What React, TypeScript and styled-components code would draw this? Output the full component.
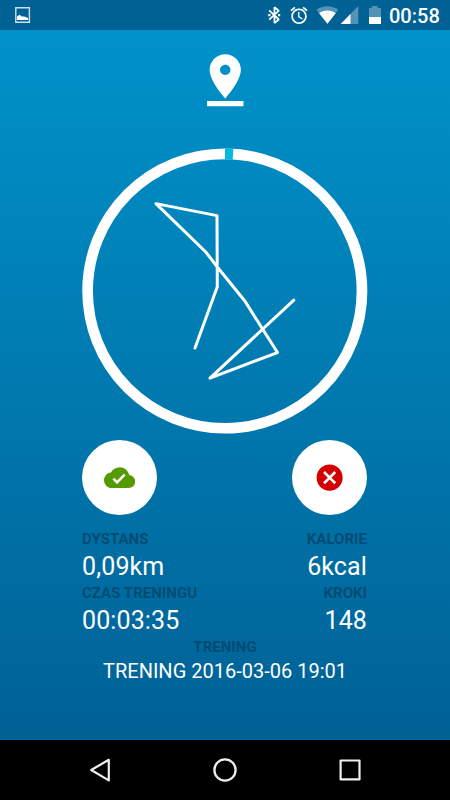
import React from 'react';
import styled, { createGlobalStyle } from 'styled-components';

const GlobalStyle = createGlobalStyle`
  * { box-sizing: border-box; }
  body { margin: 0; background: #000; font-family: Roboto, sans-serif; }
  svg { display: block; flex: none; }
`;

const Screen = styled.div`
  width: 450px;
  height: 800px;
  display: flex;
  flex-direction: column;
  overflow: hidden;
  color: #fff;
`;

const StatusBar = styled.header`
  height: 30px;
  background: #006195;
  display: flex;
  justify-content: space-between;
  padding: 0 10px 0 15px;
`;

const StatusGroup = styled.div`
  display: flex;
  align-items: center;
`;

const Clock = styled.span`
  width: 51px;
  margin-left: 8px;
  font-size: 20px;
  font-weight: 500;
  line-height: 30px;
  padding-top: 1px;
  white-space: nowrap;
`;

const Content = styled.main`
  height: 710px;
  background: linear-gradient(#0092ca, #006195);
  display: flex;
  flex-direction: column;
  align-items: center;
  padding-top: 18.75px;
`;

const RouteChart = styled.svg`
  margin-top: 37px;
`;

const Actions = styled.div`
  width: 285px;
  margin: 5.75px 1px 0 0;
  display: flex;
  justify-content: space-between;
`;

const RoundButton = styled.button<{ $tint: string }>`
  width: 75px;
  height: 75px;
  padding: 0;
  border: 0;
  border-radius: 50%;
  background: #fff;
  color: ${(p) => p.$tint};
  display: flex;
  align-items: center;
  justify-content: center;
`;

const Stats = styled.section`
  width: 285px;
  margin: 15px 1px 0 0;
  display: grid;
  grid-template-columns: 1fr 1fr;
`;

const Stat = styled.div<{ $align: 'left' | 'right' | 'center' }>`
  height: 54px;
  text-align: ${(p) => p.$align};
`;

const Label = styled.div`
  font-size: 15px;
  font-weight: 700;
  line-height: 18px;
  letter-spacing: 0.03px;
  color: #004b74;
`;

const Value = styled.div<{ $small?: boolean }>`
  font-size: ${(p) => (p.$small ? 20 : 25)}px;
  line-height: ${(p) => (p.$small ? 31 : 38)}px;
  letter-spacing: ${(p) => (p.$small ? 0 : 0.12)}px;
  white-space: nowrap;
`;

const NavBar = styled.nav`
  height: 60px;
  background: #000;
  display: flex;
  justify-content: center;
  align-items: center;
  gap: 95px;
`;

const stats = [
  { label: 'DYSTANS', value: '0,09km', align: 'left' },
  { label: 'KALORIE', value: '6kcal', align: 'right' },
  { label: 'CZAS TRENINGU', value: '00:03:35', align: 'left' },
  { label: 'KROKI', value: '148', align: 'right' },
] as const;

function StatusIcons() {
  return (
    <svg width="122" height="30" viewBox="259 0 122 30" fill="#fff">
      <path
        d="M269.2 10.4l9.6 9.1-4.3 3.6V7.2l4.3 3.4-9.6 9.1"
        fill="none"
        stroke="#fff"
        strokeWidth="1.8"
        strokeLinejoin="bevel"
      />
      <path d="M268.2 14h2.2v2.2h-2.2zM278 14h2.2v2.2H278z" />
      <g transform="translate(288.7 5.1) scale(.86)">
        <path d="M22 5.72l-4.6-3.86-1.29 1.53 4.6 3.86L22 5.72zM7.88 3.39L6.6 1.86 2 5.71l1.29 1.53 4.59-3.85zM12.5 8H11v6l4.75 2.85.75-1.23-4-2.37V8zM12 4c-4.97 0-9 4.03-9 9s4.02 9 9 9c4.97 0 9-4.03 9-9s-4.03-9-9-9zm0 16c-3.87 0-7-3.13-7-7s3.13-7 7-7 7 3.13 7 7-3.13 7-7 7z" />
      </g>
      <path d="M316.5 9.8C322.5 5.1 332.2 5.1 338.3 9.8L327.4 23.8Z" opacity=".32" />
      <path d="M319.1 13.2c4.7-3.5 11.9-3.5 16.6 0l-8.3 10.6z" />
      <path d="M358.3 6v18h-17.6z" opacity=".32" />
      <path d="M350.5 14v10h-9.8z" />
      <path d="M369 8h2.8V6h5.9v2h3.3v9H369z" opacity=".32" />
      <path d="M369 17h12v7H369z" />
    </svg>
  );
}

export default function App() {
  return (
    <>
      <GlobalStyle />
      <Screen>
        <StatusBar>
          <StatusGroup>
            <svg width="16" height="30" viewBox="15 0 16 30">
              <path d="M15.8 7.8h13.6v14.4H15.8z" fill="none" stroke="#c9e0ed" strokeWidth="1.4" />
              <path d="M17 19.9v-3.4l2.6-1.7 2.2 1.7 2.6 0 3.6 1.6v1.8z" fill="#fff" />
            </svg>
          </StatusGroup>
          <StatusGroup>
            <StatusIcons />
            <Clock>00:58</Clock>
          </StatusGroup>
        </StatusBar>

        <Content>
          <svg width="62.5" height="62.5" viewBox="0 0 24 24" fill="#fff">
            <path d="M18 8c0-3.31-2.69-6-6-6S6 4.69 6 8c0 4.5 6 11 6 11s6-6.5 6-11zm-8 0c0-1.1.9-2 2-2s2 .9 2 2-.89 2-2 2c-1.1 0-2-.9-2-2zM5 20v2h14v-2H5z" />
          </svg>

          <RouteChart width="286" height="286" viewBox="82 148.25 286 286" fill="none" stroke="#fff">
            <circle cx="224.8" cy="291.3" r="137.2" strokeWidth="10.7" />
            <path d="M225 154.1a137.2 137.2 0 0 1 8 .3" stroke="#00b9dd" strokeWidth="11" />
            <path
              d="M195 348.3L217.3 287L217 215.9L156 203.9L206 252.5L217.5 267.5L245 301.5L277.5 352.8L210 378.4L293.8 300.4"
              strokeWidth="3"
              strokeLinecap="round"
              strokeLinejoin="round"
            />
          </RouteChart>

          <Actions>
            <RoundButton $tint="#559a00" aria-label="Zapisz">
              <svg width="31.25" height="31.25" viewBox="0 0 24 24" fill="currentColor">
                <path d="M19.35 10.04C18.67 6.59 15.64 4 12 4 9.11 4 6.6 5.64 5.35 8.04 2.34 8.36 0 10.91 0 14c0 3.31 2.69 6 6 6h13c2.76 0 5-2.24 5-5 0-2.64-2.05-4.78-4.65-4.96zM10 17l-3.5-3.5 1.41-1.41L10 14.17 15.18 9l1.41 1.41L10 17z" />
              </svg>
            </RoundButton>
            <RoundButton $tint="#d40000" aria-label="Odrzuć">
              <svg width="31.25" height="31.25" viewBox="0 0 24 24" fill="currentColor">
                <path d="M12 2C6.47 2 2 6.47 2 12s4.47 10 10 10 10-4.47 10-10S17.53 2 12 2zm5 13.59L15.59 17 12 13.41 8.41 17 7 15.59 10.59 12 7 8.41 8.41 7 12 10.59 15.59 7 17 8.41 13.41 12 17 15.59z" />
              </svg>
            </RoundButton>
          </Actions>

          <Stats>
            {stats.map((s) => (
              <Stat key={s.label} $align={s.align}>
                <Label>{s.label}</Label>
                <Value>{s.value}</Value>
              </Stat>
            ))}
          </Stats>
          <Stat $align="center">
            <Label>TRENING</Label>
            <Value $small>TRENING 2016-03-06 19:01</Value>
          </Stat>
        </Content>

        <NavBar>
          <svg width="30" height="30" viewBox="85 755 30 30" fill="none" stroke="#eee" strokeWidth="2.2" strokeLinejoin="round">
            <path d="M108.8 759.8v20.6L91.2 770z" />
          </svg>
          <svg width="30" height="30" viewBox="210 755 30 30" fill="none" stroke="#eee" strokeWidth="2.3">
            <circle cx="225" cy="770" r="10.6" />
          </svg>
          <svg width="30" height="30" viewBox="335 755 30 30" fill="none" stroke="#eee" strokeWidth="2.2" strokeLinejoin="round">
            <path d="M340.6 760.5h18.9v18.9h-18.9z" />
          </svg>
        </NavBar>
      </Screen>
    </>
  );
}
